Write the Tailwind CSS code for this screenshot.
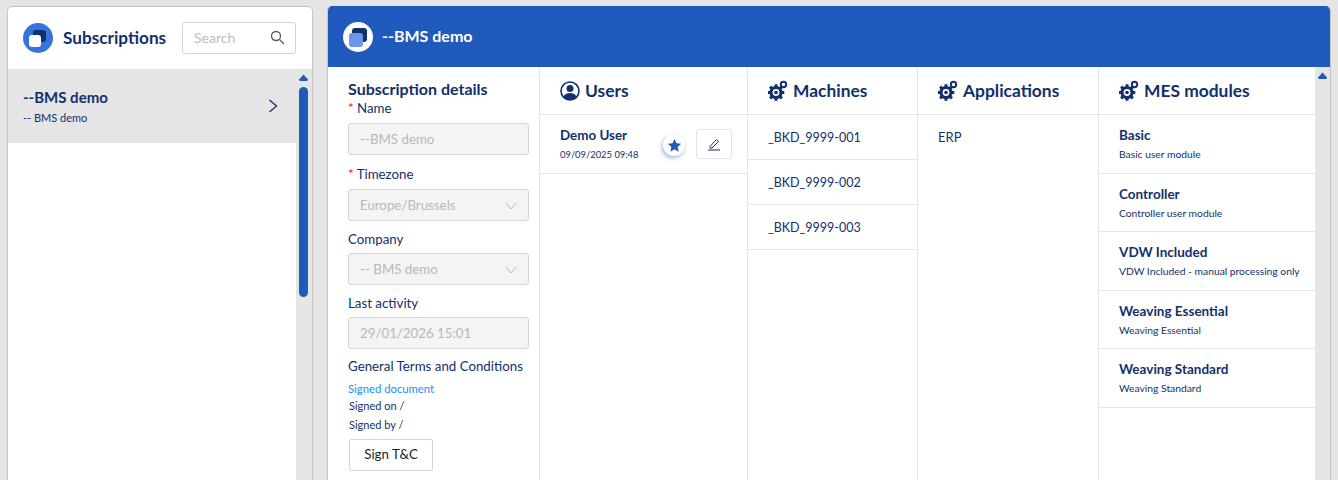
<!DOCTYPE html>
<html><head><meta charset="utf-8"><script src="https://cdn.jsdelivr.net/npm/@tailwindcss/browser@4"></script></head>
<body class="bg-[#e5e5e5] h-[480px] overflow-hidden font-['Lato','Noto_Sans',sans-serif] text-[#12306b]">
<div class="flex h-[480px] pt-[6px] pl-[7px] pr-[7px] gap-[14px]">
  <aside class="w-[306px] h-[500px] shrink-0 bg-white border border-[#c4c4c4] rounded-[5px] flex flex-col overflow-hidden">
    <div class="h-[62px] shrink-0 flex items-center pl-[15px] pr-[16px]">
      <svg width="30" height="30" viewBox="0 0 30 30" class="shrink-0"><circle cx="15" cy="15" r="15" fill="#3574dd"/><rect x="10" y="7" width="13" height="12" rx="3" fill="#12306b"/><rect x="6" y="12" width="12" height="12" rx="3" fill="#fff"/></svg>
      <span class="ml-[10px] text-[17.2px] font-bold leading-none -mt-[1px]">Subscriptions</span>
      <div class="ml-auto w-[114px] h-[32px] border border-[#d4d4d4] rounded-[3px] flex items-center pl-[11px] pr-[10px]">
        <span class="text-[14px] text-[#bdbdbd] -mt-[2px]">Search</span>
        <svg width="15" height="15" viewBox="0 0 15 15" class="ml-auto -mt-[1px]" fill="none" stroke="#555" stroke-width="1.3"><circle cx="6" cy="6" r="4.5"/><path d="M9.5 9.5L14 14"/></svg>
      </div>
    </div>
    <div class="flex flex-1">
      <div class="w-[288px]">
        <div class="h-[74px] bg-[#e5e5e5] flex items-center pl-[15px] pr-[18px]">
          <div>
            <div class="text-[15px] font-bold leading-[20px] -mt-[1px]">--BMS demo</div>
            <div class="text-[11px] leading-[14px] mt-[4px]">-- BMS demo</div>
          </div>
          <svg width="10" height="14" viewBox="0 0 10 14" class="ml-auto" fill="none" stroke="#12306b" stroke-width="1.3"><path d="M1.5 1L8.5 7L1.5 13"/></svg>
        </div>
      </div>
      <div class="w-[16px] bg-[#e5e5e5] flex flex-col items-start pl-[2.5px] pt-[5px]">
        <svg width="9" height="7" viewBox="0 0 9 7" class="block"><path d="M4.5 0.500L9 5.500Q9 7 7.500 7H1.500Q0 7 0 5.500z" fill="#1f5abc"/></svg>
        <div class="w-[9px] h-[210px] mt-[6px] rounded-[5px] bg-[#1f5abc]"></div>
      </div>
    </div>
  </aside>
  <main class="flex-1 h-[500px] bg-white border border-[#c4c4c4] border-t-0 rounded-[5px] overflow-hidden flex flex-col">
    <header class="h-[61px] shrink-0 bg-[#1f5abc] flex items-center pl-[15px]">
      <svg width="30" height="30" viewBox="0 0 30 30" class="shrink-0"><circle cx="15" cy="15" r="15" fill="#fff"/><rect x="9" y="6" width="15" height="14" rx="3" fill="#12306b"/><rect x="6" y="11" width="14" height="14" rx="3" fill="#6b95e8"/></svg>
      <span class="ml-[9px] text-white text-[16px] font-bold -mt-[2px]">--BMS demo</span>
    </header>
    <div class="flex flex-1">
      <section class="w-[212px] shrink-0 border-r border-[#e5e5e5] pl-[20px] pr-[10px] pt-[13px]">
        <h2 class="text-[16px] font-bold leading-[17px]">Subscription details</h2>
        <label class="block text-[13.3px] leading-[16px] mt-[3px]"><span class="text-[#e11]">*</span> Name</label>
        <div class="h-[32px] mt-[7px] pt-[1px] bg-[#f4f4f4] border border-[#d4d4d4] rounded-[3px] flex items-center pl-[11px] text-[13.300px] text-[#b8b8b8]">--BMS demo</div>
        <label class="block text-[13.3px] leading-[16px] mt-[11px]"><span class="text-[#e11]">*</span> Timezone</label>
        <div class="h-[32px] mt-[7px] pt-[1px] bg-[#f4f4f4] border border-[#d4d4d4] rounded-[3px] flex items-center pl-[11px] pr-[11px] text-[13.300px] text-[#b8b8b8]">Europe/Brussels<svg width="12" height="8" viewBox="0 0 12 8" class="ml-auto" fill="none" stroke="#b8b8b8"><path d="M1 1L6 7L11 1"/></svg></div>
        <label class="block text-[13.3px] leading-[16px] mt-[10px]">Company</label>
        <div class="h-[32px] mt-[6px] pt-[1px] bg-[#f4f4f4] border border-[#d4d4d4] rounded-[3px] flex items-center pl-[11px] pr-[11px] text-[13.300px] text-[#b8b8b8]">-- BMS demo<svg width="12" height="8" viewBox="0 0 12 8" class="ml-auto" fill="none" stroke="#b8b8b8"><path d="M1 1L6 7L11 1"/></svg></div>
        <label class="block text-[13.3px] leading-[16px] mt-[10px]">Last activity</label>
        <div class="h-[32px] mt-[6px] pt-[1px] bg-[#f4f4f4] border border-[#d4d4d4] rounded-[3px] flex items-center pl-[11px] text-[13.300px] text-[#b8b8b8]">29/01/2026 15:01</div>
        <div class="text-[13.3px] leading-[16px] mt-[9px] whitespace-nowrap">General Terms and Conditions</div>
        <div class="text-[11.300px] leading-[14px] mt-[8px] text-[#1890ff]">Signed document</div>
        <div class="text-[11px] leading-[14px] mt-[3px] ml-[1px]">Signed on /</div>
        <div class="text-[11px] leading-[14px] mt-[5px] ml-[1px]">Signed by /</div>
        <button class="block w-[84px] h-[32px] mt-[7px] ml-[1px] border border-[#d4d4d4] rounded-[2px] text-[13.300px] text-[#222]">Sign T&amp;C</button>
      </section>
      <section class="w-[208px] shrink-0 border-r border-[#e5e5e5]">
        <div class="h-[48px] border-b border-[#e5e5e5] flex items-center pl-[20px] gap-[5px]">
          <svg width="20" height="20" viewBox="0 0 20 20" class="shrink-0"><circle cx="10" cy="10" r="9" fill="#fff" stroke="#12306b" stroke-width="1.600"/><circle cx="10" cy="7.500" r="3.500" fill="#12306b"/><path d="M3.500 15.500C5 12.500 7.500 12 10 12s5 .5 6.500 3.500C15 18 12.500 19 10 19s-5-1-6.500-3.500z" fill="#12306b"/></svg>
          <h2 class="text-[17.4px] font-bold pt-[2px]">Users</h2>
        </div>
        <div class="h-[59px] border-b border-[#e5e5e5] flex items-center pl-[20px] pr-[15px]">
          <div>
            <div class="text-[13.4px] font-bold leading-[16px]">Demo User</div>
            <div class="text-[9.4px] leading-[13px] mt-[5px]">09/09/2025 09:48</div>
          </div>
          <div class="ml-auto w-[22px] h-[22px] mt-[2px] rounded-full bg-white shadow-[-1px_2px_4px_rgba(31,90,188,0.45)] flex items-center justify-center">
            <svg width="15" height="15" viewBox="0 0 24 24" fill="#1f5abc"><path d="M12 1.500l3.200 6.900 7.500.9-5.600 5.100 1.500 7.500L12 18.100l-6.600 3.800 1.500-7.500L1.300 9.300l7.500-.9z"/></svg>
          </div>
          <div class="ml-[11px] w-[36px] h-[30px] -mt-[1px] border border-[#e5e5e5] rounded-[3px] flex items-center justify-center">
            <svg width="14" height="14" viewBox="0 0 14 14" fill="none" stroke="#12306b" stroke-width="1"><path d="M3 9.500L9.500 2.500L11.500 4.500L5 11H3z"/><path d="M1 13H13"/></svg>
          </div>
        </div>
      </section>
      <section class="w-[170px] shrink-0 border-r border-[#e5e5e5]">
        <div class="h-[48px] border-b border-[#e5e5e5] flex items-center pl-[20px] gap-[5px]">
          <svg width="20" height="21" viewBox="0 0 20 21" class="shrink-0"><use href="#gears"/></svg>
          <h2 class="text-[17.4px] font-bold pt-[2px]">Machines</h2>
        </div>
        <div class="h-[45px] pt-[2px] border-b border-[#e5e5e5] flex items-center pl-[20px] text-[12.5px]">_BKD_9999-001</div>
        <div class="h-[45px] pt-[2px] border-b border-[#e5e5e5] flex items-center pl-[20px] text-[12.5px]">_BKD_9999-002</div>
        <div class="h-[45px] pt-[2px] border-b border-[#e5e5e5] flex items-center pl-[20px] text-[12.5px]">_BKD_9999-003</div>
      </section>
      <section class="w-[181px] shrink-0 border-r border-[#e5e5e5]">
        <div class="h-[48px] border-b border-[#e5e5e5] flex items-center pl-[20px] gap-[5px]">
          <svg width="20" height="21" viewBox="0 0 20 21" class="shrink-0"><use href="#gears"/></svg>
          <h2 class="text-[17.4px] font-bold pt-[2px]">Applications</h2>
        </div>
        <div class="h-[45px] pt-[1px] flex items-center pl-[20px] text-[13px]">ERP</div>
      </section>
      <section class="flex-1 min-w-0">
        <div class="h-[48px] border-b border-[#e5e5e5] flex items-center pl-[20px] gap-[5px]">
          <svg width="20" height="21" viewBox="0 0 20 21" class="shrink-0"><use href="#gears"/></svg>
          <h2 class="text-[17.4px] font-bold pt-[2px]">MES modules</h2>
        </div>
        <div class="h-[59px] border-b border-[#e5e5e5] pl-[20px] pt-[12px]"><div class="text-[13.5px] font-bold leading-[16px]">Basic</div><div class="text-[10.3px] leading-[13px] mt-[5px]">Basic user module</div></div>
        <div class="h-[58px] border-b border-[#e5e5e5] pl-[20px] pt-[12px]"><div class="text-[13.5px] font-bold leading-[16px]">Controller</div><div class="text-[10.3px] leading-[13px] mt-[5px]">Controller user module</div></div>
        <div class="h-[59px] border-b border-[#e5e5e5] pl-[20px] pt-[12px]"><div class="text-[13.5px] font-bold leading-[16px]">VDW Included</div><div class="text-[10.3px] leading-[13px] mt-[5px]">VDW Included - manual processing only</div></div>
        <div class="h-[58px] border-b border-[#e5e5e5] pl-[20px] pt-[12px]"><div class="text-[13.5px] font-bold leading-[16px]">Weaving Essential</div><div class="text-[10.3px] leading-[13px] mt-[5px]">Weaving Essential</div></div>
        <div class="h-[59px] border-b border-[#e5e5e5] pl-[20px] pt-[12px]"><div class="text-[13.5px] font-bold leading-[16px]">Weaving Standard</div><div class="text-[10.3px] leading-[13px] mt-[5px]">Weaving Standard</div></div>
      </section>
      <div class="w-[15px] shrink-0 bg-[#e5e5e5] flex justify-center pt-[5px]">
        <svg width="9" height="7" viewBox="0 0 9 7" class="block"><path d="M4.5 0.500L9 5.500Q9 7 7.500 7H1.500Q0 7 0 5.500z" fill="#1f5abc"/></svg>
      </div>
    </div>
  </main>
</div>
<svg width="0" height="0" class="absolute"><defs><g id="gears">
  <g fill="#12306b"><circle cx="8" cy="12.500" r="6.600"/><g stroke="#12306b" stroke-width="3"><path d="M8 4.200V20.800"/><path d="M-0.300 12.500H16.300"/><path d="M2.100 6.600L13.900 18.400"/><path d="M13.900 6.600L2.100 18.400"/></g></g>
  <circle cx="8" cy="12.500" r="3.400" fill="#fff"/><circle cx="8" cy="12.500" r="1.800" fill="#12306b"/>
  <circle cx="15.500" cy="4.500" r="2.700" fill="#fff" stroke="#12306b" stroke-width="2"/>
</g></defs></svg>
</body></html>
